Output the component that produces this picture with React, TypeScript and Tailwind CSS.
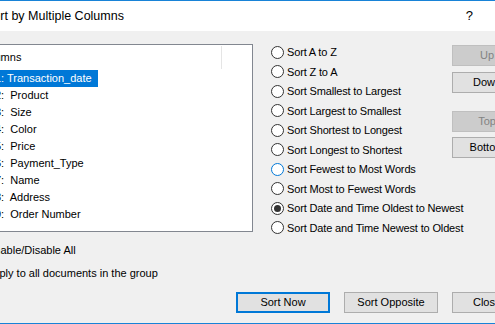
import React from "react"

const columns = [
  { n: "1", name: "Transaction_date", selected: true },
  { n: "2", name: "Product" },
  { n: "3", name: "Size" },
  { n: "4", name: "Color" },
  { n: "5", name: "Price" },
  { n: "6", name: "Payment_Type" },
  { n: "7", name: "Name" },
  { n: "8", name: "Address" },
  { n: "9", name: "Order Number" },
]

const sorts = [
  "Sort A to Z",
  "Sort Z to A",
  "Sort Smallest to Largest",
  "Sort Largest to Smallest",
  "Sort Shortest to Longest",
  "Sort Longest to Shortest",
  "Sort Fewest to Most Words",
  "Sort Most to Fewest Words",
  "Sort Date and Time Oldest to Newest",
  "Sort Date and Time Newest to Oldest",
]

function Radio({ label, checked, focus }: { label: string; checked?: boolean; focus?: boolean }) {
  return (
    <div className="flex h-[19.5px] items-center">
      <span
        className={
          "flex h-[13px] w-[13px] shrink-0 items-center justify-center rounded-full border bg-white " +
          (focus ? "border-[#0078d7]" : "border-[#333333]")
        }
      >
        {checked && <span className="h-[7px] w-[7px] rounded-full bg-[#333333]" />}
      </span>
      <span className="ml-[3px] whitespace-nowrap tracking-[-0.15px]">{label}</span>
    </div>
  )
}

function Btn({ label, disabled, def, className }: { label: string; disabled?: boolean; def?: boolean; className?: string }) {
  let look = "border border-[#adadad] bg-[#e1e1e1] text-black"
  if (disabled) look = "border border-[#bfbfbf] bg-[#cccccc] text-[#838383]"
  if (def) look = "border-2 border-[#0078d7] bg-[#e1e1e1] text-black"
  return (
    <div className={"flex h-[21px] shrink-0 items-center justify-center whitespace-nowrap " + look + " " + (className ?? "")}>
      {label}
    </div>
  )
}

export default function App() {
  return (
    <div className="flex h-[324px] w-[495px] flex-col overflow-hidden border-y border-[#1883d7] bg-[#f0f0f0] font-['Liberation_Sans',Arial,sans-serif] text-[11px] text-black">
      {/* タイトルバー */}
      <div className="flex h-[30px] shrink-0 items-center bg-white">
        <span className="-ml-[15px] whitespace-nowrap text-[12.5px]">Sort by Multiple Columns</span>
        <span className="ml-auto mr-[22px] text-[13px]">?</span>
      </div>

      <div className="flex flex-1 flex-col">
        <div className="flex items-start">
          {/* 左：列リスト */}
          <div className="flex w-[253px] shrink-0 flex-col">
            <div className="-ml-[10px] mt-[13px] flex h-[188px] w-[263px] flex-col border border-[#828790] bg-white">
              <div className="flex h-[25px] items-center">
                <span className="-ml-[13px] w-[243px] whitespace-nowrap">Columns</span>
                <span className="mt-[1px] h-[23px] w-px self-start bg-[#e5e5e5]" />
              </div>
              {columns.map((c) => (
                <div key={c.n} className="flex h-[17px] items-center pl-[10px]">
                  <span
                    className={
                      "-ml-[8px] flex h-[17px] items-center whitespace-pre pl-[2px] pr-[6px] " +
                      (c.selected ? "bg-[#0078d7] text-white" : "")
                    }
                  >
                    {c.selected ? `${c.n}: ${c.name}` : `${c.n}:  ${c.name}`}
                  </span>
                </div>
              ))}
            </div>
            <div className="mt-[10px] flex h-[17px] items-center">
              <span className="-ml-[13px] whitespace-nowrap">Enable/Disable All</span>
            </div>
            <div className="mt-[6px] flex h-[17px] items-center">
              <span className="-ml-[14px] whitespace-nowrap">Apply to all documents in the group</span>
            </div>
          </div>

          {/* 中央：並べ替え方法 */}
          <div className="ml-[18px] mt-[11.5px] flex w-[181px] shrink-0 flex-col">
            {sorts.map((s, i) => (
              <Radio key={s} label={s} checked={i === 8} focus={i === 6} />
            ))}
          </div>

          {/* 右：移動ボタン */}
          <div className="mt-[14px] flex w-[70px] shrink-0 flex-col">
            <Btn label="Up" disabled className="w-[70px]" />
            <Btn label="Down" className="mt-[6px] w-[70px]" />
            <Btn label="Top" disabled className="mt-[18px] w-[70px]" />
            <Btn label="Bottom" className="mt-[5px] w-[70px]" />
          </div>
        </div>

        {/* 下部ボタン */}
        <div className="ml-[236px] mt-[10px] flex gap-[14px]">
          <Btn label="Sort Now" def className="w-[94px]" />
          <Btn label="Sort Opposite" className="w-[94px]" />
          <Btn label="Close" className="w-[70px]" />
        </div>
      </div>
    </div>
  )
}
